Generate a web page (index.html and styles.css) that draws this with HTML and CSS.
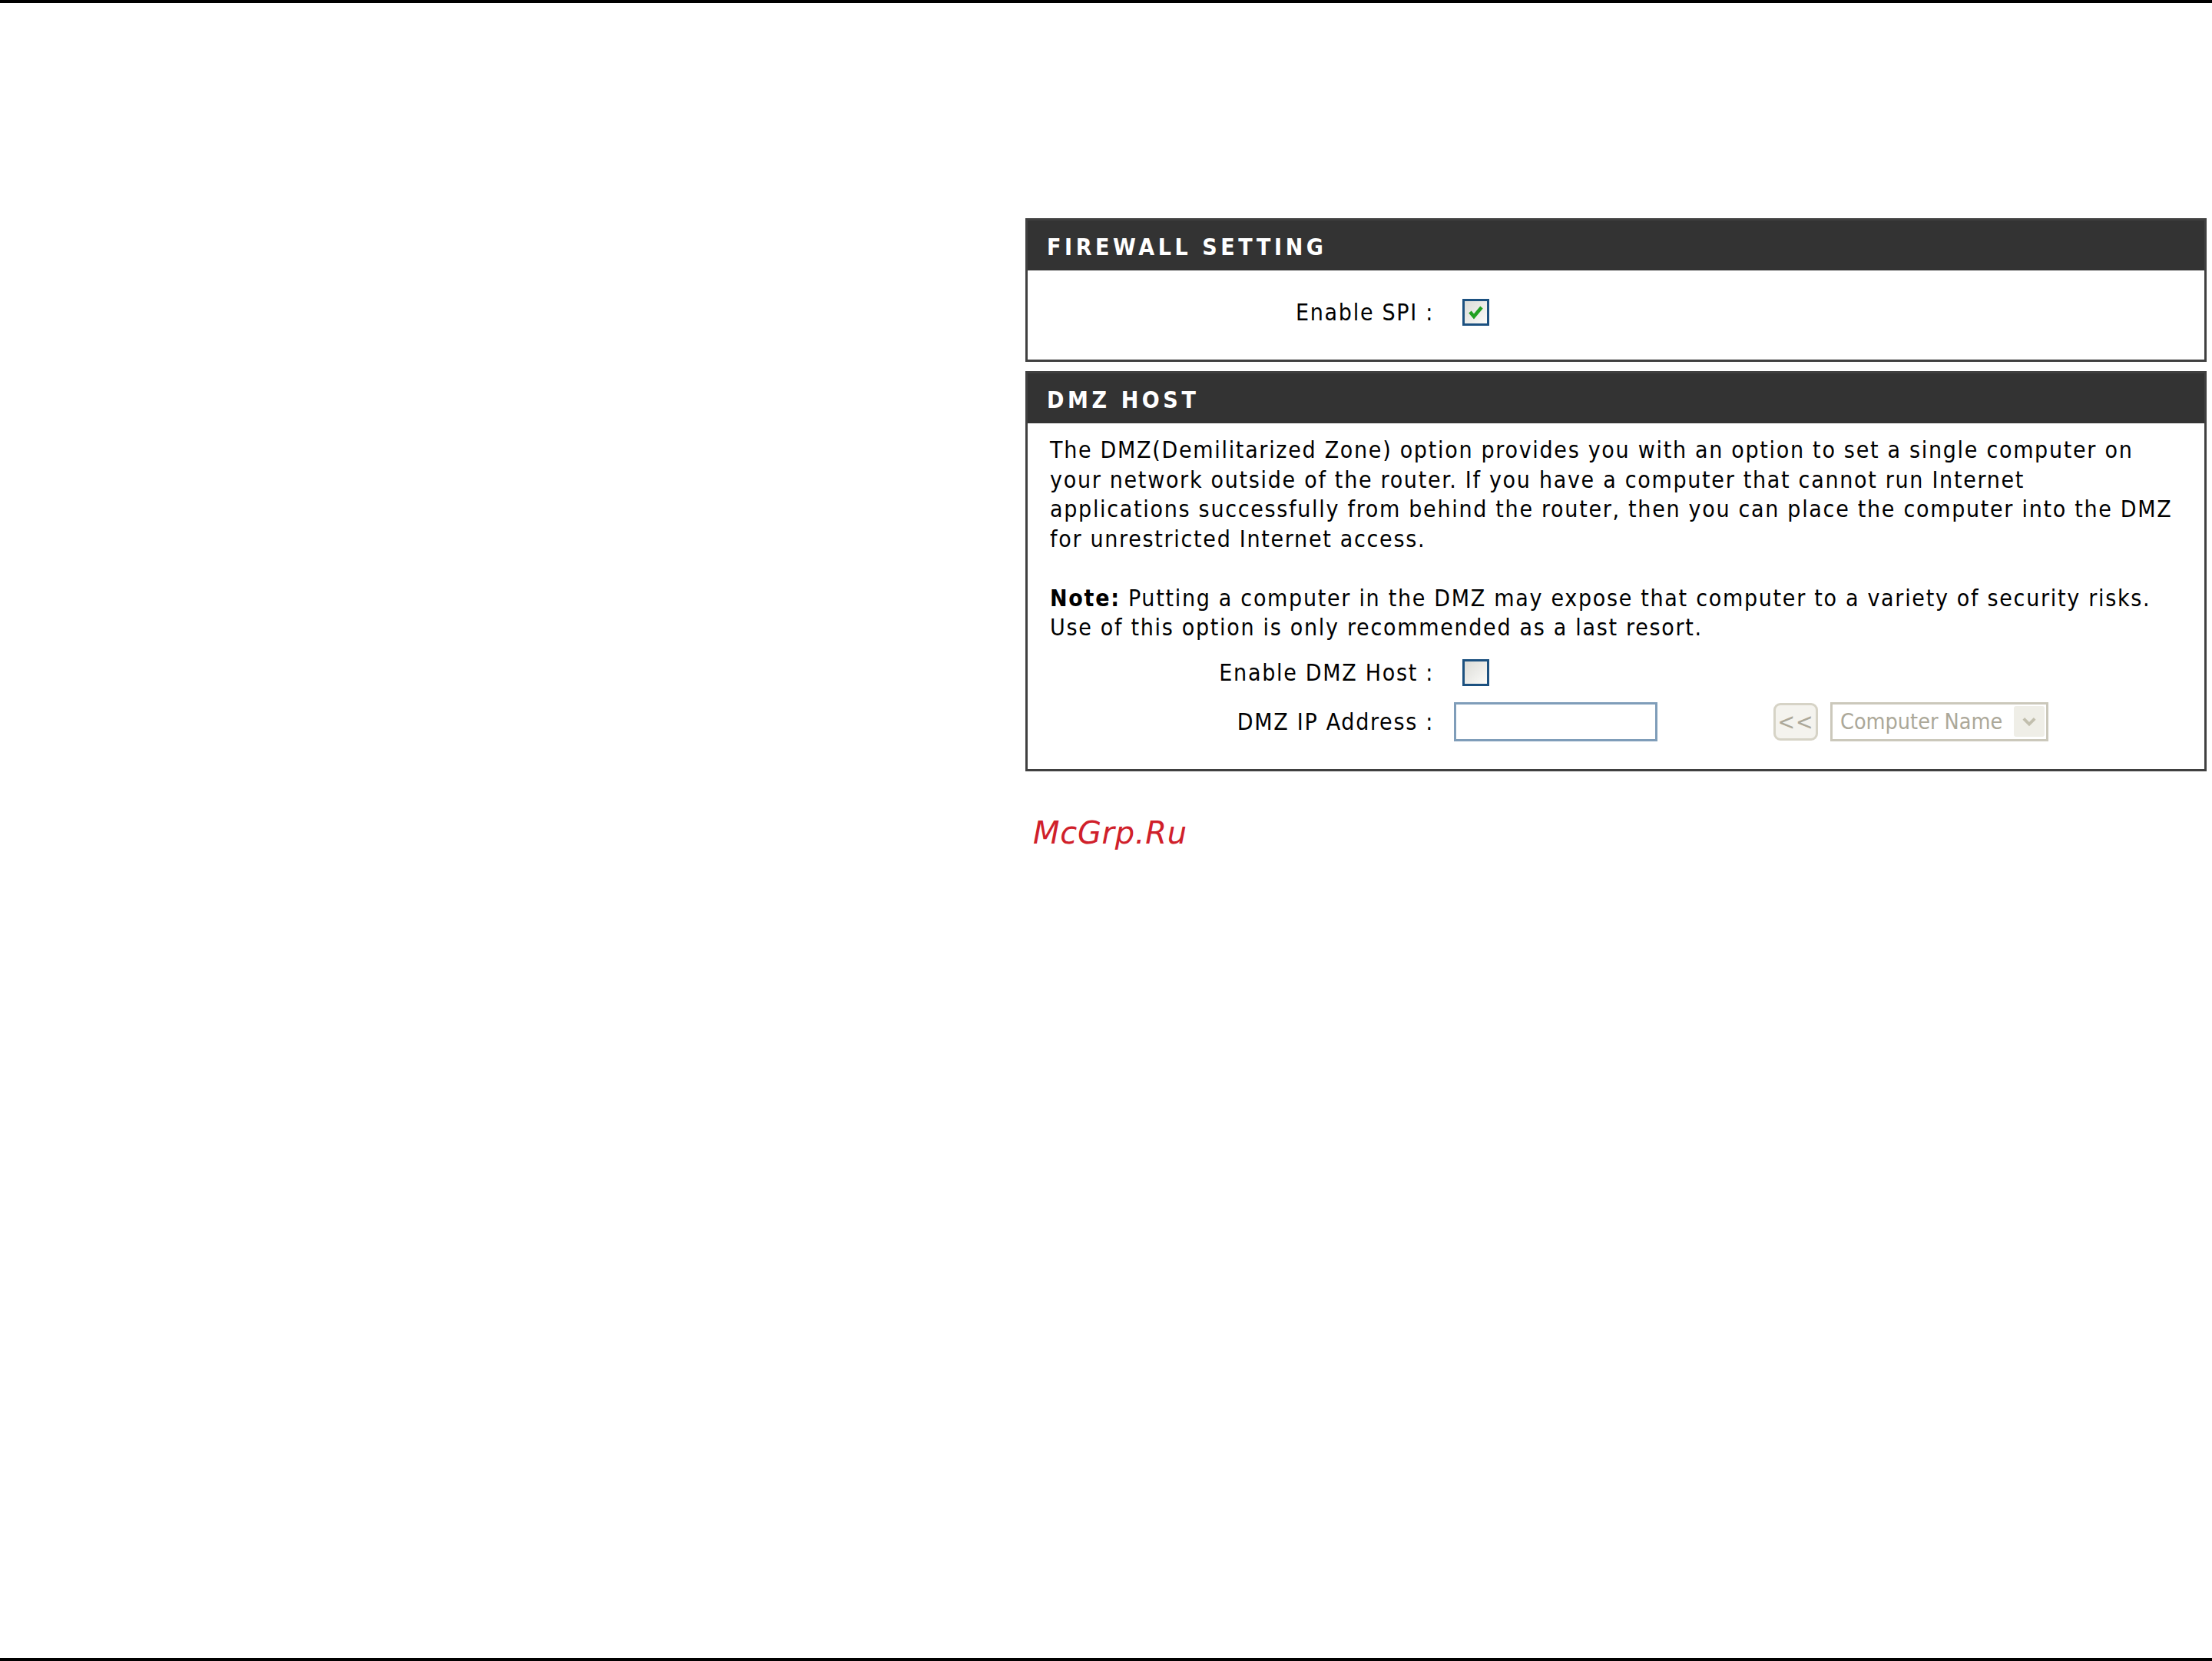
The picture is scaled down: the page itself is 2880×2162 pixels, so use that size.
FILE: index.html
```html
<!DOCTYPE html>
<html lang="en">
<head>
    <meta charset="UTF-8">
    <title>Firewall Settings</title>
    <link rel="stylesheet" href="styles.css">
</head>
<body>
    <div class="page">
        <div class="content">
            <div class="box">
                <h2>Firewall Setting</h2>
                <div class="box-body">
                    <div class="row">
                        <label>Enable SPI :</label>
                        <span class="check">
                            <svg viewBox="0 0 29 29" width="29" height="29"><path d="M7 14 L12 20 L22 8" fill="none" stroke="#21a121" stroke-width="4.5"/></svg>
                        </span>
                    </div>
                </div>
            </div>
            <div class="box">
                <h2>DMZ Host</h2>
                <div class="box-body">
                    <p>The DMZ(Demilitarized Zone) option provides you with an option to set a single computer on<br>
                    your network outside of the router. If you have a computer that cannot run Internet<br>
                    applications successfully from behind the router, then you can place the computer into the DMZ<br>
                    for unrestricted Internet access.</p>
                    <p><strong>Note:</strong> Putting a computer in the DMZ may expose that computer to a variety of security risks.<br>
                    Use of this option is only recommended as a last resort.</p>
                    <div class="row">
                        <label>Enable DMZ Host :</label>
                        <span class="check"></span>
                    </div>
                    <div class="row">
                        <label>DMZ IP Address :</label>
                        <input type="text" class="ip">
                        <button class="copy" disabled>&lt;&lt;</button>
                        <div class="select">
                            <span>Computer Name</span>
                            <span class="arrow">
                                <svg viewBox="0 0 20 20" width="24" height="24"><path d="M4 7 L10 13 L16 7" fill="none" stroke="#c2bfae" stroke-width="3.2"/></svg>
                            </span>
                        </div>
                    </div>
                </div>
            </div>
            <div class="brand">McGrp.Ru</div>
        </div>
    </div>
</body>
</html>
```

FILE: styles.css
```css
html, body { margin: 0; padding: 0; }
body { background: #fff; color: #000; font-family: "DejaVu Sans Condensed", "DejaVu Sans", sans-serif; font-stretch: condensed; font-size: 30px; letter-spacing: 1.7px; }

/* page frame: black rules top and bottom */
.page { min-height: 100vh; box-sizing: border-box; border-top: 4px solid #000; border-bottom: 4px solid #000; padding-top: 280px; }
.content { width: 1538px; margin: 0 7px 0 auto; }

/* setting boxes */
.box { border: 3px solid #404040; margin-bottom: 12px; }
.box h2 { margin: 0; height: 65px; line-height: 69px; padding-left: 25px; background: #333; color: #fff; font-size: 30px; font-weight: bold; text-transform: uppercase; letter-spacing: 4.6px; }
.box-body { padding: 16px 20px 36px 29px; }
.box-body p { margin: 0 0 38.5px; line-height: 38.5px; }
.box-body p:last-of-type { margin-bottom: 0; }

.row { display: flex; align-items: center; height: 51px; margin-top: 13px; }
.row label { width: 526px; box-sizing: border-box; padding-right: 26px; text-align: right; }

/* xp style checkbox */
.check { display: flex; align-items: center; justify-content: center; width: 35px; height: 35px; box-sizing: border-box; margin-left: 11px; border: 3px solid #1c5180; background: linear-gradient(135deg, #dcdcd7, #fbfbf9); }

.ip { width: 265px; height: 51px; box-sizing: border-box; margin: 0; padding: 0 8px; border: 3px solid #7f9db9; background: #fff; font: inherit; }

.copy { width: 58px; height: 49px; margin-left: 151px; padding: 0; border: 3px solid #d6d3c6; border-radius: 9px; background: #f4f3ee; color: #aca899; font: inherit; letter-spacing: 1px; }

.select { display: flex; align-items: center; width: 284px; height: 51px; box-sizing: border-box; margin-left: 16px; padding-left: 10px; border: 3px solid #cbc8bb; background: #fff; color: #aca899; font-size: 28.5px; letter-spacing: 0; }
.select .arrow { display: flex; align-items: center; justify-content: center; width: 40px; height: 40px; margin-left: auto; margin-right: 2px; background: #efeee7; border-radius: 3px; }

.brand { margin: 57px 0 0 10px; color: #d0202a; font-family: "DejaVu Sans", sans-serif; font-stretch: normal; font-style: oblique; font-size: 40px; letter-spacing: 0.7px; }
```
